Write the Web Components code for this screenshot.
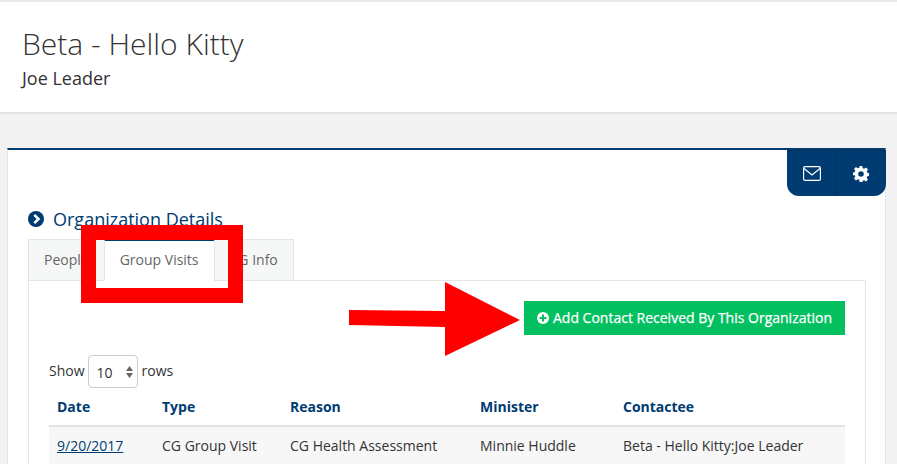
<!DOCTYPE html>
<html>
<head>
<meta charset="utf-8">
<title>Beta - Hello Kitty</title>
<style>
    html, body {
        margin: 0;
        height: 464px;
        overflow: hidden;
        background: #f3f3f3;
        font-family: "Open Sans", sans-serif;
        color: #333;
    }
</style>
</head>
<body>
<page-header heading="Beta - Hello Kitty" sub="Joe Leader"></page-header>
<org-panel>
    <org-tabs>
        <contact-bar></contact-bar>
        <rows-picker></rows-picker>
        <visit-table></visit-table>
    </org-tabs>
</org-panel>
<mark-up></mark-up>

<script>
class PageHeader extends HTMLElement {
    connectedCallback() {
        this.attachShadow({ mode: "open" });
        this.shadowRoot.innerHTML = `
            <style>
                :host {
                    display: block;
                    box-sizing: border-box;
                    height: 114px;
                    padding: 25px 22px 0;
                    background: #fff;
                    border-top: 2px solid #e9e9e9;
                    border-bottom: 2px solid #e4e4e4;
                }
                h1 {
                    margin: 0;
                    font-size: 30px;
                    line-height: 34px;
                    font-weight: 300;
                    color: #333;
                }
                p {
                    margin: 6px 0 0;
                    font-size: 18px;
                    line-height: 22px;
                    color: #333;
                }
            </style>
            <h1>${this.getAttribute("heading")}</h1>
            <p>${this.getAttribute("sub")}</p>
        `;
    }
}

class OrgPanel extends HTMLElement {
    connectedCallback() {
        this.attachShadow({ mode: "open" });
        this.shadowRoot.innerHTML = `
            <style>
                :host {
                    display: block;
                    box-sizing: border-box;
                    width: 879px;
                    height: 330px;
                    margin: 34px 0 0 7px;
                    padding: 0 19px 0 20px;
                    background: #fff;
                    border-top: 2px solid #003b71;
                    border-left: 1px solid #e6e6e6;
                    border-right: 1px solid #e6e6e6;
                    position: relative;
                }
                .tools {
                    position: absolute;
                    top: 0;
                    right: -1px;
                    display: flex;
                    width: 99px;
                    height: 46px;
                    background: #003b71;
                    border-radius: 0 0 12px 12px;
                    border-top: 1px solid #00305c;
                    box-sizing: border-box;
                }
                .tools div {
                    flex: 1;
                    display: flex;
                    align-items: center;
                    justify-content: center;
                }
                .tools div + div {
                    border-left: 1px solid #00305c;
                }
                h2 {
                    display: flex;
                    align-items: center;
                    gap: 9px;
                    margin: 0 0 5px;
                    padding-top: 54px;
                    height: 30px;
                    font-size: 18px;
                    line-height: 22px;
                    font-weight: 400;
                    color: #003b71;
                }
            </style>
            <div class="tools">
                <div>
                    <svg width="18" height="15" viewBox="0 0 18 15" fill="none" stroke="#fff" stroke-width="1.2">
                        <rect x="0.6" y="0.6" width="16.8" height="13.8" rx="1.5"/>
                        <path d="M1 2.5 L9 9 L17 2.5"/>
                    </svg>
                </div>
                <div>
                    <svg width="16" height="16" viewBox="0 0 24 24" fill="#fff" style="margin-right:1px">
                        <path fill-rule="evenodd" d="M10 0h4l.7 3.4 2 .8 2.9-1.9 2.9 2.9-1.9 2.9.8 2 3.4.7v4l-3.4.7-.8 2 1.9 2.9-2.9 2.9-2.9-1.9-2 .8L14 24h-4l-.7-3.4-2-.8-2.9 1.9-2.9-2.9 1.9-2.9-.8-2L-.8 14v-4l3.4-.7.8-2L1.5 4.4l2.9-2.9 2.9 1.9 2-.8zM12 7.8a4.2 4.2 0 1 0 0 8.4 4.2 4.2 0 0 0 0-8.4z"/>
                    </svg>
                </div>
            </div>
            <h2>
                <svg width="16" height="16" viewBox="0 0 16 16">
                    <circle cx="8" cy="8" r="8" fill="#003b71"/>
                    <path d="M6.3 3.8 L10.5 8 L6.3 12.2" fill="none" stroke="#fff" stroke-width="2.6"/>
                </svg>
                Organization Details
            </h2>
            <slot></slot>
        `;
    }
}

class OrgTabs extends HTMLElement {
    connectedCallback() {
        this.attachShadow({ mode: "open" });
        this.shadowRoot.innerHTML = `
            <style>
                :host {
                    display: block;
                }
                ul {
                    display: flex;
                    margin: 0;
                    padding: 0;
                    list-style: none;
                    height: 42px;
                    position: relative;
                    z-index: 0;
                }
                li {
                    box-sizing: border-box;
                    height: 42px;
                    padding: 0 15px;
                    font-size: 14px;
                    line-height: 40px;
                    color: #666;
                    background: #f6f7f7;
                    border: 1px solid #e4e6e6;
                    margin-right: -1px;
                }
                li.on {
                    background: #fff;
                    border-top: 2px solid #003b71;
                    border-bottom: 1px solid #fff;
                    line-height: 38px;
                }
                .body {
                    box-sizing: border-box;
                    margin-top: -1px;
                    padding: 20px 20px 0;
                    height: 200px;
                    border: 1px solid #e4e6e6;
                }
            </style>
            <ul>
                <li>People</li>
                <li class="on">Group Visits</li>
                <li>CG Info</li>
            </ul>
            <div class="body"><slot></slot></div>
        `;
    }
}

class ContactBar extends HTMLElement {
    connectedCallback() {
        this.attachShadow({ mode: "open" });
        this.shadowRoot.innerHTML = `
            <style>
                :host {
                    display: flex;
                    justify-content: flex-end;
                }
                button {
                    display: flex;
                    align-items: center;
                    gap: 4px;
                    box-sizing: border-box;
                    width: 321px;
                    height: 34px;
                    padding: 0 0 1px 13px;
                    border: 0;
                    background: #02c05f;
                    color: #fff;
                    font: 400 14px "Open Sans", sans-serif;
                    -webkit-text-stroke: 0.25px #fff;
                }
            </style>
            <button>
                <svg width="12" height="12" viewBox="0 0 12 12">
                    <circle cx="6" cy="6" r="6" fill="#fff"/>
                    <path d="M6 2.6 V9.4 M2.6 6 H9.4" stroke="#02c05f" stroke-width="2"/>
                </svg>
                Add Contact Received By This Organization
            </button>
        `;
    }
}

class RowsPicker extends HTMLElement {
    connectedCallback() {
        this.attachShadow({ mode: "open" });
        this.shadowRoot.innerHTML = `
            <style>
                :host {
                    display: flex;
                    align-items: center;
                    margin-top: 20px;
                    height: 33px;
                    font-size: 14px;
                    color: #333;
                }
                .label {
                    padding-bottom: 2px;
                }
                .box {
                    display: flex;
                    align-items: center;
                    justify-content: space-between;
                    box-sizing: border-box;
                    width: 50px;
                    height: 33px;
                    margin: 0 4px 0 3px;
                    padding: 1px 4px 0 8px;
                    border: 1px solid #ccc;
                    border-radius: 4px;
                    font-size: 14px;
                    background: #fff;
                }
            </style>
            <span class="label">Show</span>
            <div class="box">
                <span>10</span>
                <svg width="7" height="12" viewBox="0 0 7 12" fill="#666">
                    <path d="M3.5 0 L7 5 H0 Z M3.5 12 L0 7 H7 Z"/>
                </svg>
            </div>
            <span class="label">rows</span>
        `;
    }
}

class VisitTable extends HTMLElement {
    connectedCallback() {
        this.attachShadow({ mode: "open" });
        this.shadowRoot.innerHTML = `
            <style>
                :host {
                    display: block;
                    margin-top: 4px;
                    font-size: 14px;
                }
                .row {
                    display: grid;
                    grid-template-columns: 105px 128px 190px 143px 1fr;
                    align-items: center;
                    padding-left: 8px;
                }
                .head {
                    height: 29px;
                    padding-bottom: 4px;
                    font-weight: 700;
                    color: #003b71;
                    border-bottom: 2px solid #e2e2e2;
                }
                .data {
                    height: 36px;
                    padding-bottom: 1px;
                    background: #f7f7f7;
                    border-bottom: 1px solid #e2e2e2;
                    color: #333;
                }
                a {
                    color: #003b71;
                    text-decoration: underline;
                }
            </style>
            <div class="row head">
                <span>Date</span>
                <span>Type</span>
                <span>Reason</span>
                <span>Minister</span>
                <span>Contactee</span>
            </div>
            <div class="row data">
                <a href="#">9/20/2017</a>
                <span>CG Group Visit</span>
                <span>CG Health Assessment</span>
                <span>Minnie Huddle</span>
                <span>Beta - Hello Kitty:Joe Leader</span>
            </div>
        `;
    }
}

// red annotations drawn over the screenshot
class MarkUp extends HTMLElement {
    connectedCallback() {
        this.attachShadow({ mode: "open" });
        this.shadowRoot.innerHTML = `
            <style>
                :host {
                    position: absolute;
                    inset: 0;
                    z-index: 5;
                    pointer-events: none;
                }
                .frame {
                    position: absolute;
                    left: 81px;
                    top: 225px;
                    width: 162px;
                    height: 78px;
                    box-sizing: border-box;
                    border: 15px solid #f00;
                }
                svg {
                    position: absolute;
                    left: 0;
                    top: 0;
                }
            </style>
            <div class="frame"></div>
            <svg width="897" height="464">
                <polygon fill="#f00" points="349,310 445,311 445,282 520,320 445,356 445,327 349,325"/>
            </svg>
        `;
    }
}

customElements.define("page-header", PageHeader);
customElements.define("org-panel", OrgPanel);
customElements.define("org-tabs", OrgTabs);
customElements.define("contact-bar", ContactBar);
customElements.define("rows-picker", RowsPicker);
customElements.define("visit-table", VisitTable);
customElements.define("mark-up", MarkUp);
</script>
</body>
</html>
